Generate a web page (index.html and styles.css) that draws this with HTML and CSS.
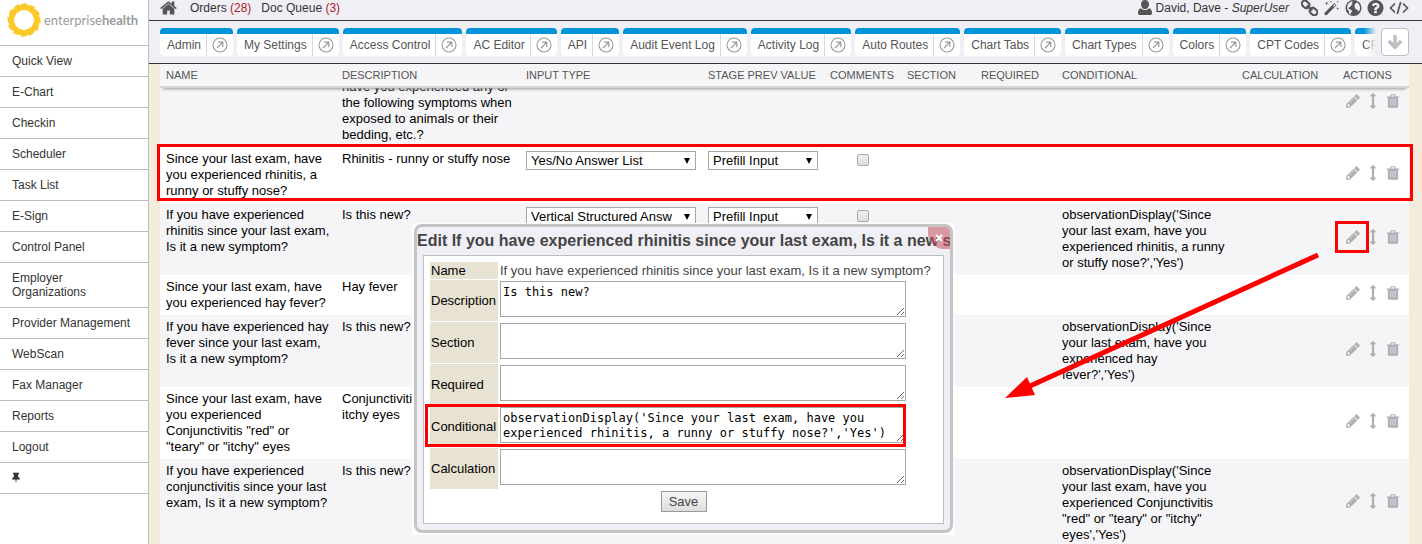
FILE: index.html
```html
<!DOCTYPE html>
<html lang="en">
<head>
<meta charset="utf-8">
<title>Enterprise Health</title>
<link rel="stylesheet" href="styles.css">
</head>
<body>
<svg class="sprite" aria-hidden="true">
  <symbol id="pencil" viewBox="0 0 1792 1792"><path d="M491 1536l91-91-235-235-91 91v107h128v128h107zm523-928q0-22-22-22-10 0-17 7l-542 542q-7 7-7 17 0 22 22 22 10 0 17-7l542-542q7-7 7-17zm-54-192l416 416-832 832h-416v-416zm683 96q0 53-37 90l-166 166-416-416 166-165q36-38 90-38 53 0 91 38l235 234q37 39 37 91z"/></symbol>
  <symbol id="updown" viewBox="0 0 1792 1792"><path d="M1216 320q0 26-19 45t-45 19h-128v1024h128q26 0 45 19t19 45-19 45l-256 256q-19 19-45 19t-45-19l-256-256q-19-19-19-45t19-45 45-19h128v-1024h-128q-26 0-45-19t-19-45 19-45l256-256q19-19 45-19t45 19l256 256q19 19 19 45z"/></symbol>
  <symbol id="trash" viewBox="0 0 1792 1792"><path fill="#cbd8f4" d="M450 560h900v950h-900z"/><path d="M704 1376v-704q0-14-9-23t-23-9h-64q-14 0-23 9t-9 23v704q0 14 9 23t23 9h64q14 0 23-9t9-23zm256 0v-704q0-14-9-23t-23-9h-64q-14 0-23 9t-9 23v704q0 14 9 23t23 9h64q14 0 23-9t9-23zm256 0v-704q0-14-9-23t-23-9h-64q-14 0-23 9t-9 23v704q0 14 9 23t23 9h64q14 0 23-9t9-23zm-544-992h448l-48-117q-7-9-17-11h-317q-10 2-17 11zm928 32v64q0 14-9 23t-23 9h-96v948q0 83-47 143.5t-113 60.5h-832q-66 0-113-58.5t-47-141.5v-952h-96q-14 0-23-9t-9-23v-64q0-14 9-23t23-9h309l70-167q15-37 54-63t79-26h320q40 0 79 26t54 63l70 167h309q14 0 23 9t9 23z"/></symbol>
  <symbol id="home" viewBox="60 250 1672 1300"><path d="M1472 992v480q0 26-19 45t-45 19h-384v-384h-256v384h-384q-26 0-45-19t-19-45v-480q0-1 .5-3t.5-3l575-474 575 474q1 2 1 6zm223-69l-62 74q-8 9-21 11h-3q-13 0-21-7l-692-577-692 577q-12 8-24 7-13-2-21-11l-62-74q-8-10-7-23.5t11-21.5l719-599q32-26 76-26t76 26l244 204v-195q0-14 9-23t23-9h192q14 0 23 9t9 23v408l219 182q10 8 11 21.5t-7 23.5z"/></symbol>
  <symbol id="question" viewBox="128 128 1536 1536"><path d="M1024 1376v-192q0-14-9-23t-23-9h-192q-14 0-23 9t-9 23v192q0 14 9 23t23 9h192q14 0 23-9t9-23zm256-672q0-88-55.5-163t-138.5-116-170-41q-243 0-371 213-15 24 8 42l132 100q7 6 19 6 16 0 25-12 53-68 86-92 34-24 86-24 48 0 85.5 26t37.5 59q0 38-20 61t-68 45q-63 28-115.5 86.5t-52.5 125.5v36q0 14 9 23t23 9h192q14 0 23-9t9-23q0-19 21.5-49.5t54.5-49.5q32-18 49-28.5t46-35 44.5-48 28-60.5 12.5-81zm384 192q0 209-103 385.5t-279.5 279.5-385.5 103-385.5-103-279.5-279.5-103-385.5 103-385.5 279.5-279.5 385.5-103 385.5 103 279.5 279.5 103 385.5z"/></symbol>
  <symbol id="user" viewBox="0 0 14 16"><path d="M7 0c2.500 0 4 1.800 4 4.200S9.500 9 7 9 3 6.600 3 4.200 4.500 0 7 0zM3 8.200C4 9.400 5.300 10 7 10s3-.6 4-1.800c2.200.3 3 2.600 3 5 0 1.200-.8 1.800-1.900 1.800H1.900C.8 15 0 14.400 0 13.200c0-2.400.8-4.700 3-5z"/></symbol>
  <symbol id="link" viewBox="0 0 18 16"><g fill="none" stroke="currentColor" stroke-width="2.200" transform="rotate(42 9 8)"><rect x="-1" y="4.700" width="8.500" height="6.400" rx="3.200"/><rect x="10.500" y="4.700" width="8.500" height="6.400" rx="3.200"/><path d="M5 7.900h8"/></g></symbol>
  <symbol id="wand" viewBox="0 0 18 16"><path d="M1.500 13.300L12 2.800l2.300 2.300L3.800 15.600q-.6.400-1.100 0l-1.200-1.200q-.4-.6 0-1.100z"/><path d="M10.600 5.800l.9.900 2-2-.9-.9z" fill="#f0eff5"/><path d="M4 1l.5 1.500L6 3l-1.500.5L4 5l-.5-1.500L2 3l1.500-.5zM8.500 0l.3 1 1 .3-1 .3-.3 1-.3-1-1-.3 1-.3zM15.500 0l.3 1 1 .3-1 .3-.3 1-.3-1-1-.3 1-.3zM15.500 7l.4 1.200 1.200.4-1.200.4-.4 1.200-.4-1.200-1.200-.4 1.200-.4z"/></symbol>
  <symbol id="globe" viewBox="0 0 16 16"><circle cx="8" cy="8" r="8"/><path fill="#f0eff5" d="M2.200 4.500L4.500 2.100l2.300-.6.500 1-1.200.8 1 .9-1.600 1.300-1 1.500-1.500.4.300 1.500 2.300.9 1 1.800-1.400 1.500-.3 1.500-1.600-1.200.2-2.300-1.600-1.700-.3-2zM9 5l1.400-2 1.700-.5 1.600 2.300.9 2.700-.3 2.400-1.500 1.700-1-1.900-2-1-.7-2z"/></symbol>
  <symbol id="code" viewBox="0 0 20 16"><path fill="none" stroke="currentColor" stroke-width="1.700" d="M6 3.500L1.500 8 6 12.500M14 3.500L18.500 8 14 12.500M11.700 2L8.300 14"/></symbol>
  <symbol id="pin" viewBox="0 0 9 12"><path d="M1 0h7v1.500H7V5q2 1 2 2.800H5.200L4.500 12l-.7-4.200H0Q0 6 2 5V1.500H1z"/></symbol>
  <symbol id="open" viewBox="0 0 16 16"><g fill="none" stroke="currentColor"><circle cx="8" cy="8" r="7" stroke-width="1.100"/><path stroke-width="1.200" d="M5 11l5.500-5.500M6 5.200h4.800V10"/></g></symbol>
</svg>

<div class="app">
  <nav class="sidebar">
    <a class="logo" href="#">
      <svg class="logo-mark" viewBox="-17 -17 34 34" aria-hidden="true">
        <circle r="12.500" fill="none" stroke="#fbcb2a" stroke-width="5"/>
        <g fill="#fbcb2a">
          <path id="petal" d="M-4-10L-5-14.500Q0-17.500 3.500-16.500Q2-14 4-10z"/>
          <use href="#petal" transform="rotate(30)"/><use href="#petal" transform="rotate(60)"/><use href="#petal" transform="rotate(90)"/><use href="#petal" transform="rotate(120)"/><use href="#petal" transform="rotate(150)"/><use href="#petal" transform="rotate(180)"/><use href="#petal" transform="rotate(210)"/><use href="#petal" transform="rotate(240)"/><use href="#petal" transform="rotate(270)"/><use href="#petal" transform="rotate(300)"/><use href="#petal" transform="rotate(330)"/>
        </g>
        <circle r="13" fill="none" stroke="#f2ab1c" stroke-width="3" stroke-dasharray="1 5.800" opacity=".4"/>
      </svg>
      <span class="logo-text">enterprise<b>health</b></span>
    </a>
    <a class="nav-item" href="#">Quick View</a>
    <a class="nav-item" href="#">E-Chart</a>
    <a class="nav-item" href="#">Checkin</a>
    <a class="nav-item" href="#">Scheduler</a>
    <a class="nav-item" href="#">Task List</a>
    <a class="nav-item" href="#">E-Sign</a>
    <a class="nav-item" href="#">Control Panel</a>
    <a class="nav-item" href="#">Employer<br>Organizations</a>
    <a class="nav-item" href="#">Provider Management</a>
    <a class="nav-item" href="#">WebScan</a>
    <a class="nav-item" href="#">Fax Manager</a>
    <a class="nav-item" href="#">Reports</a>
    <a class="nav-item" href="#">Logout</a>
    <a class="nav-item" href="#" aria-label="Pin menu"><svg class="pin"><use href="#pin"/></svg></a>
  </nav>

  <main class="main">
    <header class="topbar">
      <a href="#" aria-label="Home"><svg class="home"><use href="#home"/></svg></a>
      <a class="queue orders" href="#">Orders <span>(28)</span></a>
      <a class="queue" href="#">Doc Queue <span>(3)</span></a>
      <div class="account">
        <svg class="user"><use href="#user"/></svg>
        <span>David, Dave - <i>SuperUser</i></span>
      </div>
      <div class="tools">
        <a href="#" aria-label="Links"><svg class="tool"><use href="#link"/></svg></a>
        <a href="#" aria-label="Tools"><svg class="tool"><use href="#wand"/></svg></a>
        <a href="#" aria-label="Web"><svg class="tool"><use href="#globe"/></svg></a>
        <a href="#" aria-label="Help"><svg class="tool"><use href="#question"/></svg></a>
        <a href="#" aria-label="Code"><svg class="tool tool-wide"><use href="#code"/></svg></a>
      </div>
    </header>

    <div class="tabbar">
      <div class="tabs">
        <div class="tab"><a href="#">Admin</a><a class="pop" href="#" aria-label="Open"><svg><use href="#open"/></svg></a></div>
        <div class="tab"><a href="#">My Settings</a><a class="pop" href="#" aria-label="Open"><svg><use href="#open"/></svg></a></div>
        <div class="tab"><a href="#">Access Control</a><a class="pop" href="#" aria-label="Open"><svg><use href="#open"/></svg></a></div>
        <div class="tab"><a href="#">AC Editor</a><a class="pop" href="#" aria-label="Open"><svg><use href="#open"/></svg></a></div>
        <div class="tab"><a href="#">API</a><a class="pop" href="#" aria-label="Open"><svg><use href="#open"/></svg></a></div>
        <div class="tab"><a href="#">Audit Event Log</a><a class="pop" href="#" aria-label="Open"><svg><use href="#open"/></svg></a></div>
        <div class="tab"><a href="#">Activity Log</a><a class="pop" href="#" aria-label="Open"><svg><use href="#open"/></svg></a></div>
        <div class="tab"><a href="#">Auto Routes</a><a class="pop" href="#" aria-label="Open"><svg><use href="#open"/></svg></a></div>
        <div class="tab"><a href="#">Chart Tabs</a><a class="pop" href="#" aria-label="Open"><svg><use href="#open"/></svg></a></div>
        <div class="tab"><a href="#">Chart Types</a><a class="pop" href="#" aria-label="Open"><svg><use href="#open"/></svg></a></div>
        <div class="tab"><a href="#">Colors</a><a class="pop" href="#" aria-label="Open"><svg><use href="#open"/></svg></a></div>
        <div class="tab"><a href="#">CPT Codes</a><a class="pop" href="#" aria-label="Open"><svg><use href="#open"/></svg></a></div>
        <div class="tab tab-last"><a href="#">CP</a></div>
      </div>
      <button class="more" type="button" aria-label="More tabs"><svg viewBox="0 0 18 18"><path d="M9 1v14M2 8l7 7 7-7" fill="none" stroke="#bfbfc3" stroke-width="4"/></svg></button>
    </div>

    <div class="content">
      <table class="grid">
        <thead>
          <tr><th>NAME</th><th>DESCRIPTION</th><th>INPUT TYPE</th><th>STAGE PREV VALUE</th><th>COMMENTS</th><th>SECTION</th><th>REQUIRED</th><th>CONDITIONAL</th><th>CALCULATION</th><th>ACTIONS</th></tr>
        </thead>
        <tbody>
          <tr class="scrolled">
            <td></td><td>have you experienced any or the following symptoms when exposed to animals or their bedding, etc.?</td><td></td><td></td><td></td><td></td><td></td><td></td><td></td>
            <td class="actions"><button type="button" aria-label="Edit"><svg><use href="#pencil"/></svg></button><button type="button" aria-label="Move"><svg><use href="#updown"/></svg></button><button type="button" aria-label="Delete"><svg><use href="#trash"/></svg></button></td>
          </tr>
          <tr class="marked">
            <td>Since your last exam, have you experienced rhinitis, a runny or stuffy nose?</td><td>Rhinitis - runny or stuffy nose</td>
            <td><span class="pick"><select aria-label="Input type"><option>Yes/No Answer List</option></select></span></td>
            <td><span class="pick pick-short"><select aria-label="Stage previous value"><option>Prefill Input</option></select></span></td>
            <td class="check"><input type="checkbox" aria-label="Comments"></td><td></td><td></td><td></td><td></td>
            <td class="actions"><button type="button" aria-label="Edit"><svg><use href="#pencil"/></svg></button><button type="button" aria-label="Move"><svg><use href="#updown"/></svg></button><button type="button" aria-label="Delete"><svg><use href="#trash"/></svg></button></td>
          </tr>
          <tr>
            <td>If you have experienced rhinitis since your last exam, Is it a new symptom?</td><td>Is this new?</td>
            <td><span class="pick"><select aria-label="Input type"><option>Vertical Structured Answ</option></select></span></td>
            <td><span class="pick pick-short"><select aria-label="Stage previous value"><option>Prefill Input</option></select></span></td>
            <td class="check"><input type="checkbox" aria-label="Comments"></td><td></td><td></td>
            <td>observationDisplay('Since your last exam, have you experienced rhinitis, a runny or stuffy nose?','Yes')</td><td></td>
            <td class="actions"><button class="circled" type="button" aria-label="Edit"><svg><use href="#pencil"/></svg></button><button type="button" aria-label="Move"><svg><use href="#updown"/></svg></button><button type="button" aria-label="Delete"><svg><use href="#trash"/></svg></button></td>
          </tr>
          <tr>
            <td>Since your last exam, have you experienced hay fever?</td><td>Hay fever</td><td></td><td></td><td></td><td></td><td></td><td></td><td></td>
            <td class="actions"><button type="button" aria-label="Edit"><svg><use href="#pencil"/></svg></button><button type="button" aria-label="Move"><svg><use href="#updown"/></svg></button><button type="button" aria-label="Delete"><svg><use href="#trash"/></svg></button></td>
          </tr>
          <tr>
            <td>If you have experienced hay fever since your last exam, Is it a new symptom?</td><td>Is this new?</td><td></td><td></td><td></td><td></td><td></td>
            <td>observationDisplay('Since your last exam, have you experienced hay<br>fever?','Yes')</td><td></td>
            <td class="actions"><button type="button" aria-label="Edit"><svg><use href="#pencil"/></svg></button><button type="button" aria-label="Move"><svg><use href="#updown"/></svg></button><button type="button" aria-label="Delete"><svg><use href="#trash"/></svg></button></td>
          </tr>
          <tr>
            <td>Since your last exam, have you experienced Conjunctivitis "red" or<br>"teary" or "itchy" eyes</td><td>Conjunctivitis<br>itchy eyes</td><td></td><td></td><td></td><td></td><td></td><td></td><td></td>
            <td class="actions"><button type="button" aria-label="Edit"><svg><use href="#pencil"/></svg></button><button type="button" aria-label="Move"><svg><use href="#updown"/></svg></button><button type="button" aria-label="Delete"><svg><use href="#trash"/></svg></button></td>
          </tr>
          <tr>
            <td>If you have experienced conjunctivitis since your last exam, Is it a new symptom?</td><td>Is this new?</td><td></td><td></td><td></td><td></td><td></td>
            <td>observationDisplay('Since your last exam, have you experienced Conjunctivitis "red" or "teary" or "itchy" eyes','Yes')</td><td></td>
            <td class="actions"><button type="button" aria-label="Edit"><svg><use href="#pencil"/></svg></button><button type="button" aria-label="Move"><svg><use href="#updown"/></svg></button><button type="button" aria-label="Delete"><svg><use href="#trash"/></svg></button></td>
          </tr>
        </tbody>
      </table>
    </div>
  </main>

  <div class="dialog-frame">
    <section class="dialog" role="dialog" aria-labelledby="dialog-title">
      <h2 id="dialog-title">Edit If you have experienced rhinitis since your last exam, Is it a new s</h2>
      <button class="close" type="button" aria-label="Close"><svg viewBox="0 0 8 8"><path d="M1 1l6 6M7 1L1 7" stroke="#fff" stroke-width="2"/></svg></button>
      <form class="panel">
        <div class="field field-name"><span class="label">Name</span><span class="value">If you have experienced rhinitis since your last exam, Is it a new symptom?</span></div>
        <div class="field"><label class="label" for="description">Description</label><textarea id="description">Is this new?</textarea></div>
        <div class="field"><label class="label" for="section">Section</label><textarea id="section"></textarea></div>
        <div class="field"><label class="label" for="required">Required</label><textarea id="required"></textarea></div>
        <div class="field field-marked"><label class="label" for="conditional">Conditional</label><textarea id="conditional">observationDisplay('Since your last exam, have you experienced rhinitis, a runny or stuffy nose?','Yes')</textarea></div>
        <div class="field"><label class="label" for="calculation">Calculation</label><textarea id="calculation"></textarea></div>
        <button class="save" type="button">Save</button>
      </form>
    </section>
  </div>

  <svg class="pointer" viewBox="0 0 320 150" aria-hidden="true"><path d="M314 5L26 136" stroke="#f00" stroke-width="5"/><path d="M1 148L23 127L31 145z" fill="#f00"/></svg>
</div>
</body>
</html>
```
FILE: styles.css
```css
*, *::before, *::after { box-sizing: border-box; }

body {
  margin: 0;
  font-family: "Liberation Sans", Arial, sans-serif;
  font-size: 12px;
  line-height: 14px;
  color: #333;
}

a { color: inherit; text-decoration: none; }
button { font: inherit; padding: 0; cursor: pointer; }
svg { display: block; fill: currentColor; }
.sprite { position: absolute; width: 0; height: 0; }

.app {
  position: relative;
  display: flex;
  height: 100vh;
  overflow: hidden;
}

/* Sidebar */
.sidebar {
  flex: none;
  width: 149px;
  background: #fff;
  border-right: 1px solid #bdbdc1;
}
.logo {
  display: flex;
  align-items: center;
  gap: 3px;
  height: 46px;
  padding: 0 0 5px 7px;
  border-bottom: 1px solid #bdbdc1;
}
.logo-mark { width: 34px; height: 34px; }
.logo-text { font-family: Lato, sans-serif; font-size: 13px; color: #9b9b9b; }
.nav-item {
  display: block;
  padding: 8px 12px;
  border-bottom: 1px solid #bdbdc1;
}
.pin { width: 8px; height: 14px; }

/* Top bar */
.main {
  flex: 1;
  min-width: 0;
  display: flex;
  flex-direction: column;
  background: #f3ebdc;
}
.topbar {
  flex: none;
  display: flex;
  align-items: center;
  height: 21px;
  padding: 0 13px 5px 11px;
  background: #f0eff5;
  border-bottom: 1px solid #333;
}
.home { width: 17px; height: 14px; color: #555; }
.queue { margin-left: 10px; }
.queue.orders { margin-left: 13px; }
.queue span { color: #b01830; }
.account { display: flex; align-items: center; gap: 4px; margin-left: auto; }
.user { width: 14px; height: 16px; color: #555; }
.tools { display: flex; gap: 5px; margin-left: 12px; color: #555; }
.tool { width: 17px; height: 16px; }
.tool-wide { width: 20px; }

/* Tabs */
.tabbar {
  flex: none;
  display: flex;
  gap: 5px;
  height: 43px;
  padding: 7px 13px 7px 11px;
  background: #f0eff5;
  border-bottom: 1px solid #333;
}
.tabs {
  flex: 1;
  min-width: 0;
  display: flex;
  gap: 4px;
  height: 28px;
  overflow: hidden;
  -webkit-mask-image: linear-gradient(to left, transparent, #000 12px);
  mask-image: linear-gradient(to left, transparent, #000 12px);
}
.tab {
  flex: none;
  display: flex;
  align-items: stretch;
  padding-left: 7px;
  background: #fff;
  border-top: 6px solid #0095da;
  border-radius: 4px;
  line-height: 22px;
  color: #555;
}
.tab-last { flex: 1; }
.pop {
  display: flex;
  align-items: center;
  justify-content: center;
  width: 27px;
  margin-left: 5px;
  border-left: 1px solid #d8d8dc;
  color: #999;
}
.pop svg { width: 16px; height: 16px; }
.more {
  flex: none;
  display: flex;
  align-items: center;
  justify-content: center;
  width: 28px;
  height: 28px;
  background: #fff;
  border: 1px solid #bfbfc3;
  border-radius: 4px;
}
.more svg { width: 16px; height: 16px; }

/* Question grid */
.content { flex: 1; min-height: 0; padding: 0 13px 0 11px; overflow: hidden; }
.grid, .grid tbody { display: block; }
.grid thead {
  display: block;
  position: relative;
  z-index: 1;
  margin-bottom: -29px;
  background: #f5f5f8;
  border-bottom: 2px solid #d5d5d8;
  box-shadow: 0 4px 3px -3px #999;
}
.grid tr {
  position: relative;
  display: grid;
  grid-template-columns: 176fr 184fr 182fr 122fr 77fr 74fr 81fr 180fr 101fr 72fr;
}
.grid th {
  padding: 4px 0 4px 6px;
  font-size: 11px;
  font-weight: normal;
  text-align: left;
  white-space: nowrap;
  color: #555;
}
.grid td {
  padding: 4px 3px 4px 6px;
  font-size: 13px;
  line-height: 16px;
  color: #000;
}
.grid tbody tr { background: #fff; }
.grid tbody tr:nth-child(odd) { background: #f5f5f8; }
.grid .scrolled td { padding-top: 20px; }
.grid td.actions, .grid .scrolled td.actions {
  display: flex;
  align-items: center;
  gap: 4px;
  padding: 0 0 4px 8px;
}
.actions button {
  display: block;
  position: relative;
  background: none;
  border: 0;
  color: #b0b0b0;
}
.actions svg { width: 16px; height: 16px; }
.grid td.check { padding: 7px 0 0 33px; }

.pick { display: block; position: relative; width: 170px; }
.pick-short { width: 110px; }
.pick::after {
  content: "";
  position: absolute;
  right: 6px;
  top: 7px;
  border: 3px solid transparent;
  border-top: 6px solid #000;
  border-bottom: 0;
}
.pick select {
  appearance: none;
  display: block;
  width: 100%;
  height: 19px;
  padding: 0 0 0 4px;
  font: 13px/16px "Liberation Sans", Arial, sans-serif;
  color: #000;
  background: #fff;
  border: 1px solid #a6a6a6;
  border-radius: 0;
}
.check input {
  appearance: none;
  display: block;
  width: 12px;
  height: 12px;
  margin: 0;
  background: linear-gradient(#eee, #ddd);
  border: 1px solid #aaa;
  border-radius: 2px;
}

/* Highlight marks */
.marked::after {
  content: "";
  position: absolute;
  inset: -3px -4px 2px -3px;
  border: 3px solid #f00;
  pointer-events: none;
}
.circled::after {
  content: "";
  position: absolute;
  inset: -8px -8px -8px -10px;
  border: 3px solid #f00;
}
.pointer {
  position: absolute;
  right: 98px;
  top: 250px;
  width: 320px;
  height: 150px;
}

/* Edit dialog */
.dialog-frame {
  position: absolute;
  z-index: 2;
  left: 412px;
  top: 223px;
  padding: 1px 2px 2px;
  background: #fcfcfc;
}
.dialog {
  position: relative;
  width: 539px;
  padding: 0 6px 6px;
  overflow: hidden;
  background: #f0eff5;
  border: 3px solid #c4c4c4;
  border-radius: 8px;
}
.dialog h2 {
  margin: 0 -6px;
  font-size: 16px;
  line-height: 28px;
  white-space: nowrap;
  color: #444;
}
.close {
  position: absolute;
  right: 0;
  top: 0;
  display: flex;
  align-items: center;
  justify-content: center;
  width: 22px;
  height: 22px;
  background: rgba(200, 80, 95, .55);
  border: 0;
  border-bottom-left-radius: 16px;
}
.close svg { width: 8px; height: 8px; }
.panel {
  display: flex;
  flex-direction: column;
  gap: 1px;
  padding: 6px 6px 11px;
  background: #fff;
  border: 1px solid #bdbdc4;
  font-size: 13px;
}
.field { position: relative; display: flex; gap: 2px; height: 41px; }
.field-name { height: 17px; line-height: 17px; color: #444; }
.label {
  display: flex;
  align-items: center;
  flex: none;
  width: 68px;
  padding-left: 1px;
  background: #e8e2d3;
  color: #000;
}
.field textarea {
  width: 406px;
  height: 36px;
  margin-top: 1px;
  padding: 3px 2px 0;
  overflow: hidden;
  font: 12px/15px "DejaVu Sans Mono", monospace;
  color: #000;
  background: #fff;
  border: 1px solid #a6a6a6;
}
.field-marked { z-index: 1; }
.field-marked::after {
  content: "";
  position: absolute;
  left: -5px;
  top: -2px;
  width: 481px;
  height: 43px;
  border: 3px solid #f00;
  pointer-events: none;
}
.save {
  align-self: center;
  width: 46px;
  height: 21px;
  margin-top: 1px;
  background: linear-gradient(#f6f6f6, #ddd);
  border: 1px solid #999;
  color: #444;
}
```
